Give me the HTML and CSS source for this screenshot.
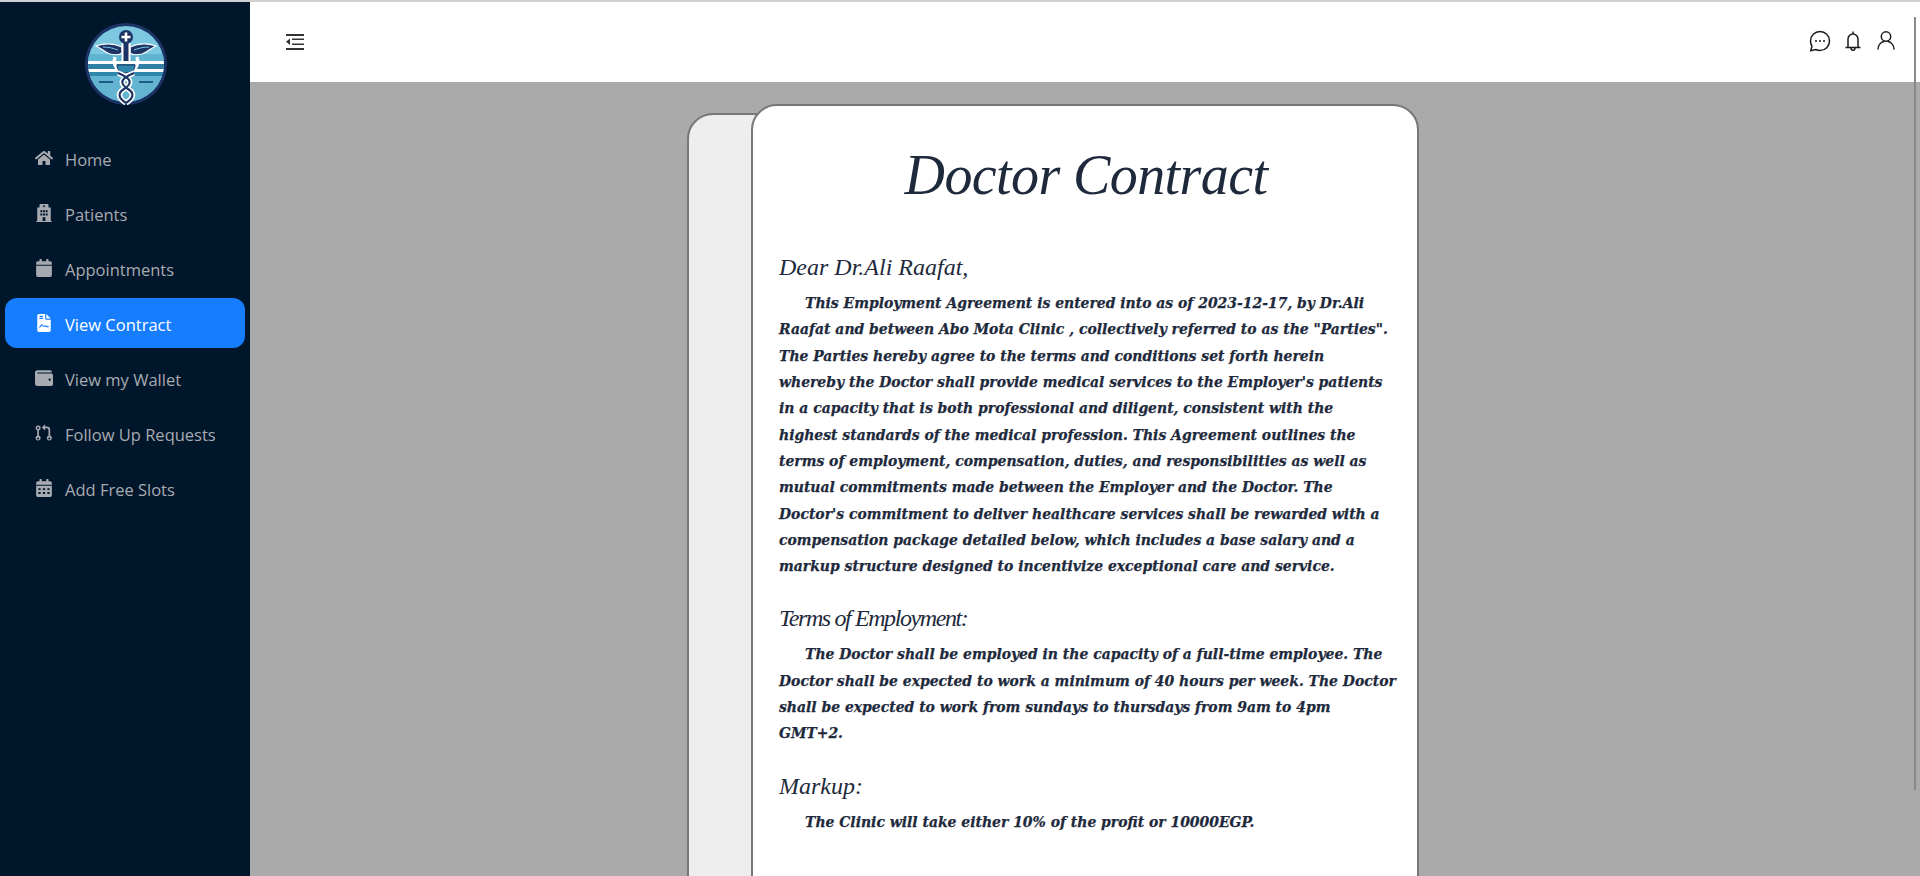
FILE: index.html
```html
<!DOCTYPE html>
<html lang="en">
<head>
<meta charset="utf-8">
<title>Doctor Contract</title>
<link rel="stylesheet" href="styles.css">
</head>
<body>
<div class="app">
  <aside class="sidebar">
    <div class="logo-wrap">
      <svg class="logo" viewBox="0 0 82 82">
        <defs><clipPath id="lc"><circle cx="41" cy="41" r="38"/></clipPath></defs>
        <circle cx="41" cy="41" r="41" fill="#1c3365"/>
        <g clip-path="url(#lc)">
          <rect width="82" height="82" fill="#7cc8e0"/>
          <rect y="31" width="82" height="7" fill="#5fb4d2"/>
          <rect y="38" width="82" height="3" fill="#fff"/>
          <rect y="41" width="82" height="5" fill="#2f7ea6"/>
          <rect y="46" width="82" height="3" fill="#fff"/>
          <rect y="49" width="82" height="4" fill="#2f86ad"/>
          <rect y="53" width="82" height="30" fill="#62b4d0"/>
          <rect x="14" y="58" width="14" height="2" fill="#1f5c88"/>
          <rect x="54" y="58" width="14" height="2" fill="#1f5c88"/>
        </g>
        <path d="M37 24C28 20 20 20 11 23c5 2 8 6 14 8 5 1 10 1 12-1zM45 24c9-4 17-4 26-1-5 2-8 6-14 8-5 1-10 1-12-1z" fill="#1c3365" stroke="#fff" stroke-width="1.200"/>
        <path d="M18 24c5 0 10 1 15 3M64 24c-5 0-10 1-15 3" stroke="#7cc8e0" stroke-width="1" fill="none"/>
        <rect x="36.500" y="20" width="9" height="20" fill="#fff"/>
        <rect x="38.500" y="20" width="5" height="18" fill="#1c3365"/>
        <circle cx="41" cy="14" r="7" fill="#1c3365"/>
        <path d="M41 9.500v9M36.500 14h9" stroke="#fff" stroke-width="2.600"/>
        <path d="M30 34c-2 6 1 11 4 14 4 3 10 3 14 0 3-3 6-8 4-14" fill="none" stroke="#fff" stroke-width="3.400"/>
        <path d="M32 42h18c0 5-3 8-9 8s-9-3-9-8z" fill="#2f86ad" stroke="#1c3365" stroke-width="1"/>
        <path d="M33 50c15 6 14 11 6 16s-4 10 2 14M49 50c-15 6-14 11-6 16s4 10-2 14" fill="none" stroke="#fff" stroke-width="5.500"/>
        <path d="M33 50c15 6 14 11 6 16s-4 10 2 14M49 50c-15 6-14 11-6 16s4 10-2 14" fill="none" stroke="#1c3365" stroke-width="2.200"/>
      </svg>
    </div>
    <nav class="nav">
      <a class="nav-item">
        <svg class="nav-icon" viewBox="0 0 576 512"><path d="M280.370 148.260 96 300.110V464a16 16 0 0 0 16 16l112.060-.29a16 16 0 0 0 15.920-16V368a16 16 0 0 1 16-16h64a16 16 0 0 1 16 16v95.640a16 16 0 0 0 16 16.050L464 480a16 16 0 0 0 16-16V300L295.670 148.260a12.190 12.190 0 0 0-15.300 0zM571.600 251.470 488 182.560V44.050a12 12 0 0 0-12-12h-56a12 12 0 0 0-12 12v72.610L318.470 43a48 48 0 0 0-61 0L4.340 251.470a12 12 0 0 0-1.600 16.900l25.500 31A12 12 0 0 0 45.150 301l235.220-193.740a12.190 12.190 0 0 1 15.300 0L530.900 301a12 12 0 0 0 16.900-1.600l25.500-31a12 12 0 0 0-1.700-16.930z"/></svg>
        <span>Home</span>
      </a>
      <a class="nav-item">
        <svg class="nav-icon" viewBox="0 0 448 512"><path fill-rule="evenodd" d="M128 0h192a32 32 0 0 1 32 32v64h64v384h32v32H0v-32h32V96h64V32a32 32 0 0 1 32-32zM212 28v20h-20v24h20v20h24V72h20V48h-20V28zM120 176v56h56v-56zm76 0v56h56v-56zm76 0v56h56v-56zM120 272v56h56v-56zm152 0v56h56v-56zM196 272v56h56v-56zm-12 104v104h80V376z"/></svg>
        <span>Patients</span>
      </a>
      <a class="nav-item">
        <svg class="nav-icon" viewBox="0 0 448 512"><path d="M0 464a48 48 0 0 0 48 48h352a48 48 0 0 0 48-48V192H0zM400 64h-48V16a16 16 0 0 0-16-16h-32a16 16 0 0 0-16 16v48H160V16a16 16 0 0 0-16-16h-32a16 16 0 0 0-16 16v48H48A48 48 0 0 0 0 112v48h448v-48a48 48 0 0 0-48-48z"/></svg>
        <span>Appointments</span>
      </a>
      <a class="nav-item active">
        <svg class="nav-icon" viewBox="0 0 384 512"><path fill-rule="evenodd" d="M48 0h176v128a32 32 0 0 0 32 32h128v304a48 48 0 0 1-48 48H48a48 48 0 0 1-48-48V48A48 48 0 0 1 48 0zM64 50v34h100V50zm0 58v34h100v-34zM56 390c40 0 54-64 78-64s14 40 40 40 24-14 44-14 30 26 110 26v-30c-60 0-74-26-108-26-20 0-30 12-44 12s-8-40-42-40c-42 0-52 66-78 66zM256 0l128 128H256z"/></svg>
        <span>View Contract</span>
      </a>
      <a class="nav-item">
        <svg class="nav-icon" viewBox="0 0 512 512"><path d="M461.200 128H80c-8.840 0-16-7.160-16-16s7.160-16 16-16h384c8.840 0 16-7.160 16-16 0-26.510-21.490-48-48-48H64C28.650 32 0 60.650 0 96v320c0 35.350 28.650 64 64 64h397.200c28.020 0 50.800-21.530 50.800-48V176c0-26.470-22.780-48-50.800-48zM416 336c-17.670 0-32-14.330-32-32s14.330-32 32-32 32 14.330 32 32-14.330 32-32 32z"/></svg>
        <span>View my Wallet</span>
      </a>
      <a class="nav-item">
        <svg class="nav-icon" viewBox="0 0 16 16"><path d="M.5 3.500a2.250 2.250 0 1 1 3 2.120v4.760a2.250 2.250 0 1 1-1.500 0V5.620A2.250 2.250 0 0 1 .5 3.500zm2.250-.9a.9.9 0 1 0 0 1.800.9.900 0 0 0 0-1.800zm0 9.300a.9.900 0 1 0 0 1.800.9.900 0 0 0 0-1.800zM9 .3v2h1.500a3 3 0 0 1 3 3v5.080a2.250 2.250 0 1 1-1.500 0V5.300a1.500 1.500 0 0 0-1.500-1.500H9v2L6 3.050zm3.750 11.600a.9.900 0 1 0 0 1.800.9.900 0 0 0 0-1.800z" fill-rule="evenodd"/></svg>
        <span>Follow Up Requests</span>
      </a>
      <a class="nav-item">
        <svg class="nav-icon" viewBox="0 0 448 512"><path fill-rule="evenodd" d="M0 464a48 48 0 0 0 48 48h352a48 48 0 0 0 48-48V192H0zM64 260h64v52H64zm128 0h64v52h-64zm128 0h64v52h-64zM64 372h64v52H64zm128 0h64v52h-64zm128 0h64v52h-64zM400 64h-48V16a16 16 0 0 0-16-16h-32a16 16 0 0 0-16 16v48H160V16a16 16 0 0 0-16-16h-32a16 16 0 0 0-16 16v48H48A48 48 0 0 0 0 112v48h448v-48a48 48 0 0 0-48-48z"/></svg>
        <span>Add Free Slots</span>
      </a>
    </nav>
  </aside>
  <div class="main">
    <header class="topbar">
      <svg class="menu-icon" viewBox="0 0 18 16"><path d="M0 0h18v2H0zM6 4.500h12V6H6zM6 9.500h12V11H6zM0 14h18v2H0z"/><path d="M4 4.500v6.500L0 7.750z"/></svg>
      <div class="top-actions">
        <svg class="top-icon" viewBox="0 0 24 24"><path class="line" d="M12 2.500c5.300 0 9.500 4.200 9.500 9.500s-4.200 9.500-9.500 9.500c-1.500 0-2.900-.3-4.200-1l-5 1.300 1.100-4.700A9.400 9.400 0 0 1 2.500 12c0-5.300 4.200-9.500 9.500-9.500z"/><circle cx="8" cy="12" r="1"/><circle cx="12" cy="12" r="1"/><circle cx="16" cy="12" r="1"/></svg>
        <svg class="top-icon" viewBox="0 0 24 24"><path class="line" d="M7 18.500V10a5 5 0 0 1 10 0v8.500M4.500 18.500h15M12 5V2.500M10 19c0 3 4 3 4 0"/></svg>
        <svg class="top-icon" viewBox="0 0 24 24"><circle class="line" cx="12" cy="7.500" r="4.700"/><path class="line" d="M4 20.500c0-4.500 3-7.500 6.500-8.200M20 20.500c0-4.500-3-7.500-6.500-8.200"/></svg>
      </div>
    </header>
    <main class="content">
      <div class="paper-stack">
        <div class="paper-back"></div>
        <article class="paper">
          <h1 class="title">Doctor Contract</h1>
          <h2 class="section">Dear Dr.Ali Raafat,</h2>
          <p class="body-text">This Employment Agreement is entered into as of 2023-12-17, by Dr.Ali<br>Raafat and between Abo Mota Clinic , collectively referred to as the "Parties".<br>The Parties hereby agree to the terms and conditions set forth herein<br>whereby the Doctor shall provide medical services to the Employer's patients<br>in a capacity that is both professional and diligent, consistent with the<br>highest standards of the medical profession. This Agreement outlines the<br>terms of employment, compensation, duties, and responsibilities as well as<br>mutual commitments made between the Employer and the Doctor. The<br>Doctor's commitment to deliver healthcare services shall be rewarded with a<br>compensation package detailed below, which includes a base salary and a<br>markup structure designed to incentivize exceptional care and service.</p>
          <h2 class="section section-tight">Terms of Employment:</h2>
          <p class="body-text">The Doctor shall be employed in the capacity of a full-time employee. The<br>Doctor shall be expected to work a minimum of 40 hours per week. The Doctor<br>shall be expected to work from sundays to thursdays from 9am to 4pm<br>GMT+2.</p>
          <h2 class="section">Markup:</h2>
          <p class="body-text">The Clinic will take either 10% of the profit or 10000EGP.</p>
        </article>
      </div>
    </main>
  </div>
</div>
<div class="scroll-thumb"></div>
</body>
</html>
```
FILE: styles.css
```css
* { box-sizing: border-box; }
html, body { margin: 0; height: 100%; overflow: hidden; }
body { font-family: "Open Sans", "Noto Sans", sans-serif; background: #aaa; border-top: 2px solid #d0d0d0; }
.app { display: flex; height: 874px; }
.sidebar { width: 250px; flex: none; background: #00162b; padding: 0 5px; }
.logo-wrap { display: flex; justify-content: center; padding: 21px 0 0 2px; height: 131px; }
.logo { width: 82px; height: 82px; }
.nav { display: flex; flex-direction: column; gap: 5px; }
.nav-item { display: flex; align-items: center; height: 50px; padding: 2px 0 0 30px; border-radius: 12px; color: #a7abb1; font-size: 16.500px; }
.nav-item.active { background: #177dff; color: #fff; }
.nav-icon { width: 18px; height: 18px; margin-right: 12px; fill: currentColor; position: relative; top: -1px; flex: none; }
.main { flex: 1; display: flex; flex-direction: column; min-width: 0; }
.topbar { height: 80px; flex: none; background: #fff; display: flex; align-items: center; justify-content: space-between; padding: 0 22px 0 36px; }
.menu-icon { width: 18px; height: 16px; fill: #333; }
.top-actions { display: flex; gap: 9px; padding-bottom: 2px; }
.top-icon { width: 24px; height: 24px; fill: #1a1a1a; }
.top-icon .line { fill: none; stroke: #1a1a1a; stroke-width: 1.500; }
.content { flex: 1; background: #aaa; overflow: hidden; display: flex; justify-content: center; }
.paper-stack { position: relative; width: 668px; height: 900px; margin-top: 22px; }
.paper-back { position: absolute; left: -64px; top: 9px; width: 200px; height: 900px; background: #eee; border: 2px solid #777; border-radius: 26px 0 0 0; }
.paper { position: relative; height: 900px; background: #fff; border: 2px solid #777; border-radius: 26px; padding: 36px 24px 0 26px; color: #1e2a3c; white-space: nowrap; }
.title { margin: 0 0 40px; text-align: center; font: italic 400 56px/1.2 "Liberation Serif", serif; letter-spacing: -.6px; }
.section { margin: 0 0 5px; font: italic 400 24px/36px "Liberation Serif", serif; }
.section-tight { letter-spacing: -1.400px; }
.body-text { margin: 0 0 21px; font: italic 700 15.500px/26.300px "DejaVu Serif", serif; font-stretch: condensed; text-indent: 26px; -webkit-text-stroke: .25px #1e2a3c; }
.scroll-thumb { position: absolute; right: 4px; top: 17px; width: 2px; height: 773px; background: #888; }
```
